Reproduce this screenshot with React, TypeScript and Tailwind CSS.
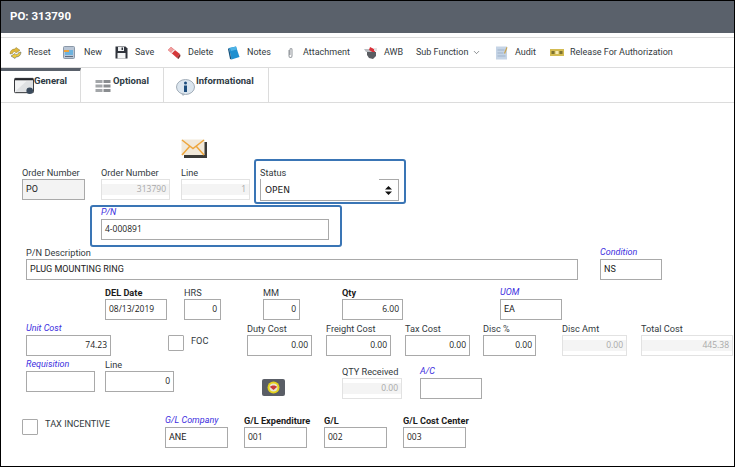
import type { ReactNode } from 'react';
import { ChevronDown } from 'lucide-react';

const ui = "font-['Roboto','Noto_Sans',sans-serif]";
const digits = "font-['Open_Sans',sans-serif]";

function ResetIcon() {
  return (
    <svg width="13" height="12" viewBox="0 0 13 12" className="shrink-0">
      <path d="M1 7c0-3 2-5 5-5l1-1.500 4 2.800-4 2.700-1-1.500c-1 0-2 .5-2.500 2z" fill="#e2b93a" stroke="#8a7a32" strokeWidth=".5" />
      <path d="M12 5c0 3-2 5-5 5l-1 1.500-4-2.500 4-2.500 1 1.200c1 0 2-.5 2.500-2z" fill="#eccb3f" stroke="#4c5860" strokeWidth=".5" />
    </svg>
  );
}

function NewIcon() {
  return (
    <svg width="12" height="13" viewBox="0 0 12 13" className="shrink-0">
      <rect x="0.500" y="0.500" width="11" height="12" rx="1" fill="#b9c6d6" stroke="#8b98a8" />
      <rect x="2" y="4" width="8" height="5" fill="#6db3de" />
      <rect x="1" y="4" width="5" height="2" fill="#eda23a" />
      <rect x="2" y="10" width="8" height="1" fill="#5e6b7c" />
    </svg>
  );
}

function SaveIcon() {
  return (
    <svg width="13" height="13" viewBox="0 0 13 13" className="shrink-0">
      <path d="M.5.500h10l2 2v10H.5z" fill="#30343c" />
      <rect x="3" y="1" width="6" height="4" fill="#eef0f2" />
      <rect x="6.500" y="1.500" width="1.500" height="2.500" fill="#30343c" />
      <rect x="2.500" y="7" width="8" height="5.500" fill="#f4f5f6" />
    </svg>
  );
}

function DeleteIcon() {
  return (
    <svg width="14" height="13" viewBox="0 0 14 13" className="shrink-0">
      <path d="M1 4 4 1l9 7-3 4z" fill="#d5383a" />
      <path d="M1 4 4 1l3 2.500-3 3z" fill="#f0a0a0" />
      <path d="M4 6.500 7 3.500l1 .8-3 3z" fill="#f5f5f5" />
      <path d="M10 12l3-4 .5 2-2 3z" fill="#7c2b2b" />
    </svg>
  );
}

function NotesIcon() {
  return (
    <svg width="12" height="14" viewBox="0 0 12 14" className="shrink-0">
      <path d="M1 2 8 .5 11.500 11l-8 2.500z" fill="#1d8fd0" />
      <path d="M1 2 3.500 13.500 2 13 0 3z" fill="#12527e" />
      <path d="M8 .5l1 3-6 1.500-1-3z" fill="#4eb3e6" />
    </svg>
  );
}

function AttachmentIcon() {
  return (
    <svg width="5" height="12" viewBox="0 0 5 12" className="shrink-0">
      <path d="M1 3v6a1.500 1.500 0 0 0 3 0V2.500a1 1 0 0 0-2 0V8" fill="none" stroke="#9a9ea3" strokeWidth="1.100" />
    </svg>
  );
}

function AwbIcon() {
  return (
    <svg width="15" height="14" viewBox="0 0 15 14" className="shrink-0">
      <path d="M0 3h9l1 3H2z" fill="#b9bcc0" />
      <path d="M6 1l6 3-2 3-5-3z" fill="#d9323a" />
      <path d="M3 6h9v4l-3 3-4-1-2-3z" fill="#5a5d62" />
      <rect x="10" y="2" width="3" height="3" fill="#e2e2e2" />
    </svg>
  );
}

function AuditIcon() {
  return (
    <svg width="12" height="14" viewBox="0 0 12 14" className="shrink-0">
      <rect width="11" height="13" y="0.500" fill="#c5d4e6" />
      <path d="M1.500 4h7M1.500 7h6M1.500 10h8" stroke="#9fb2c9" />
      <path d="M8 7l2.500-6 1 .5L9 8z" fill="#c9a24a" />
    </svg>
  );
}

function ReleaseIcon() {
  return (
    <svg width="14" height="7" viewBox="0 0 14 7" className="shrink-0">
      <rect width="14" height="7" fill="#d3bb52" />
      <rect x="1.500" y="2" width="3" height="3" fill="#7d7330" />
      <rect x="5.500" y="2" width="3" height="3" fill="#f5ecb8" />
      <rect x="9.500" y="2" width="3" height="3" fill="#7d7330" />
    </svg>
  );
}

function WindowIcon() {
  return (
    <svg width="20" height="18" viewBox="0 0 21 18" className="shrink-0">
      <rect x="0.500" y="1" width="20" height="15" rx="1" fill="#f1f2f3" stroke="#26282c" />
      <rect x="1" y="1" width="19" height="2" fill="#26282c" />
      <path d="M2 14 13 4h7v11H2z" fill="#dfe1e3" />
      <circle cx="16.500" cy="14" r="3.500" fill="#3a4a5c" />
    </svg>
  );
}

function GridIcon() {
  return (
    <svg width="16" height="14" viewBox="0 0 16 14" className="shrink-0">
      {[1, 5.5, 10].map((y) => (
        <g key={y}>
          <rect x="0.500" y={y} width="7" height="3" fill="#a3a6a9" />
          <rect x="8.500" y={y} width="7" height="3" fill="#8a8d90" />
        </g>
      ))}
    </svg>
  );
}

function InfoIcon() {
  return (
    <svg width="19" height="17" viewBox="0 0 19 17" className="shrink-0">
      <ellipse cx="9.500" cy="8" rx="9" ry="7.500" fill="#dbe5ee" stroke="#a2adb8" />
      <path d="M5 14l2 3 2-2z" fill="#aab5c0" />
      <circle cx="9.500" cy="4" r="1.500" fill="#1c4c7c" />
      <rect x="8" y="6.500" width="3" height="6.500" fill="#1c4c7c" />
    </svg>
  );
}

function MailIcon() {
  return (
    <svg width="26" height="19" viewBox="0 0 26 19">
      <rect x="3" y="3" width="23" height="16" fill="#3b3b38" />
      <rect x="0.500" y="0.500" width="23" height="15.500" fill="#f1e9da" />
      <path d="M1 1l11 8.500L23 1M1 16l8-9M23 16l-8-9" fill="none" stroke="#eea63c" strokeWidth="1.500" />
    </svg>
  );
}

function CoinIcon() {
  return (
    <div className="flex h-[17px] w-[23px] items-center justify-center rounded-[2px] bg-[#5a5e66]">
      <svg width="13" height="13" viewBox="0 0 13 13">
        <circle cx="6.500" cy="6.500" r="6" fill="#e4d21c" />
        <circle cx="6.500" cy="6.500" r="4" fill="#e8e4d0" />
        <path d="M3 6c1-2 6-2 7 0l-3.500 3z" fill="#c8383a" />
      </svg>
    </div>
  );
}

function ToolItem({ icon, label, className }: { icon: ReactNode; label: ReactNode; className: string }) {
  return (
    <div className={`flex shrink-0 items-center whitespace-nowrap ${className}`}>
      {icon}
      {label}
    </div>
  );
}

function Label({ text, kind }: { text: string; kind?: 'link' | 'bold' }) {
  const tone =
    kind === 'link'
      ? 'text-[9px] text-[#3d2fe0] italic'
      : kind === 'bold'
        ? 'text-[9.200px] font-bold text-[#1c1c1c]'
        : 'text-[9.200px] text-[#333a40]';
  return <div className={`flex h-[12px] items-center whitespace-nowrap ${ui} ${tone}`}>{text}</div>;
}

function Field({
  label,
  kind,
  value,
  className,
  align,
  variant,
  plain,
}: {
  label?: string;
  kind?: 'link' | 'bold';
  value?: string;
  className: string;
  align?: 'right';
  variant?: 'disabled' | 'shaded';
  plain?: boolean;
}) {
  const box =
    variant === 'disabled'
      ? 'border-[#e2e2e2] bg-[linear-gradient(#fff_20%,#f4f4f4_20%,#f4f4f4_80%,#fff_80%)] text-[#a8a8a8]'
      : variant === 'shaded'
        ? 'border-[#a9a9a9] bg-[#f3f3f3] text-[#222]'
        : 'border-[#a9a9a9] bg-white text-[#222]';
  // letters render in the UI face, digits in the wider one
  const face = plain ? `text-[9px] ${ui}` : `text-[8.500px] ${digits}`;
  return (
    <div className={`shrink-0 ${className}`}>
      {label && <Label text={label} kind={kind} />}
      <div
        className={`flex h-[21px] items-center border px-[3px] ${face} ${box} ${align === 'right' ? 'justify-end' : ''}`}
      >
        {value}
      </div>
    </div>
  );
}

function Checkbox() {
  return <div className="h-[16px] w-[16px] shrink-0 rounded-[1px] border border-[#a9a9a9] bg-white" />;
}

export default function App() {
  return (
    <div className="box-border h-[467px] w-[735px] overflow-hidden border border-black bg-white">
      <div className={`flex h-[32px] items-center bg-[#5a616b] pl-[9px] text-[11.500px] font-bold text-white ${ui}`}>
        PO: 313790
      </div>

      <div className={`mt-[4px] flex h-[31px] items-center border-y border-[#dcdcdc] pl-[8px] text-[9px] text-[#333a40] ${ui}`}>
        <ToolItem className="w-[54px] gap-[6px]" icon={<ResetIcon />} label="Reset" />
        <ToolItem className="w-[52px] gap-[9px]" icon={<NewIcon />} label="New" />
        <ToolItem className="w-[52px] gap-[7px]" icon={<SaveIcon />} label="Save" />
        <ToolItem className="w-[61px] gap-[7px]" icon={<DeleteIcon />} label="Delete" />
        <ToolItem className="w-[60px] gap-[7px]" icon={<NotesIcon />} label="Notes" />
        <ToolItem className="w-[76px] gap-[10px]" icon={<AttachmentIcon />} label="Attachment" />
        <ToolItem className="w-[52px] gap-[5px]" icon={<AwbIcon />} label="AWB" />
        <div className="flex w-[80px] shrink-0 items-center gap-[4px] whitespace-nowrap">
          Sub Function
          <ChevronDown size={9} strokeWidth={1.5} />
        </div>
        <ToolItem className="w-[54px] gap-[7px]" icon={<AuditIcon />} label="Audit" />
        <ToolItem className="gap-[6px]" icon={<ReleaseIcon />} label="Release For Authorization" />
      </div>

      <div className={`flex h-[35px] border-b border-[#dcdcdc] text-[9.500px] font-bold text-[#2e3a44] ${ui}`}>
        <div className="flex w-[80px] border-r border-t-[3px] border-r-[#dcdcdc] border-t-[#5a616b] pl-[13px] pt-[3px]">
          <div className="mt-[3px]"><WindowIcon /></div>
          <span className="leading-[14px]">General</span>
        </div>
        <div className="flex w-[83px] border-r border-[#dcdcdc] pl-[14px] pt-[6px]">
          <div className="mr-[2px] mt-[5px]"><GridIcon /></div>
          <span className="leading-[14px]">Optional</span>
        </div>
        <div className="flex w-[105px] border-r border-[#dcdcdc] pl-[12px] pt-[6px]">
          <div className="mr-[1px] mt-[5px]"><InfoIcon /></div>
          <span className="leading-[14px]">Informational</span>
        </div>
      </div>

      {/* Order row: envelope sits over the Line column */}
      <div className="mt-[36px] flex items-end pl-[21px]">
        <Field className="w-[63px]" label="Order Number" value="PO" variant="shaded" plain />
        <Field className="ml-[16px] w-[69px]" label="Order Number" value="313790" align="right" variant="disabled" />
        <div className="ml-[11px] w-[69px] shrink-0">
          <div className="mb-[9px]"><MailIcon /></div>
          <Field className="w-[69px]" label="Line" value="1" align="right" variant="disabled" />
        </div>
        <div className="mb-[-4px] ml-[4px] box-border h-[45px] w-[152px] shrink-0 rounded-[3px] border-[2px] border-[#3a75b5] pl-[4px] pt-[6px]">
          <Label text="Status" />
          <div className="flex h-[22px] w-[139px] items-stretch justify-between border-b border-l border-r border-[#a9a9a9] pl-[4px] text-[9px] text-[#222] font-['DejaVu_Sans',sans-serif]">
            <span className="mt-[5px]">OPEN</span>
            <div className="flex w-[19px] items-center justify-center border-t border-[#a9a9a9]">
              <svg width="7" height="9" viewBox="0 0 7 9">
                <path d="M3.500 0 7 3.500H0zM3.500 9 0 5.500h7z" fill="#111" />
              </svg>
            </div>
          </div>
        </div>
      </div>

      <div className="ml-[89px] mt-[5px] box-border h-[42px] w-[252px] rounded-[3px] border-[2px] border-[#3a75b5] pl-[9px]">
        <Label text="P/N" kind="link" />
        <div className={`flex h-[21px] w-[228px] items-center border border-[#a9a9a9] px-[3px] text-[8.500px] text-[#222] ${digits}`}>
          4-000891
        </div>
      </div>

      <div className="flex pl-[25px]">
        <Field className="w-[552px]" label="P/N Description" value="PLUG MOUNTING RING" plain />
        <Field className="ml-[22px] w-[62px]" label="Condition" kind="link" value="NS" plain />
      </div>

      <div className="mt-[7px] flex pl-[25px]">
        <Field className="ml-[79px] w-[62px]" label="DEL Date" kind="bold" value="08/13/2019" />
        <Field className="ml-[17px] w-[37px]" label="HRS" value="0" align="right" />
        <Field className="ml-[42px] w-[37px]" label="MM" value="0" align="right" />
        <Field className="ml-[42px] w-[61px]" label="Qty" kind="bold" value="6.00" align="right" />
        <Field className="ml-[97px] w-[62px]" label="UOM" kind="link" value="EA" plain />
      </div>

      <div className="mt-[3px] flex pl-[25px]">
        <Field className="w-[85px]" label="Unit Cost" kind="link" value="74.23" align="right" />
        <div className="ml-[57px] mt-[12px] flex w-[79px] shrink-0 items-start gap-[7px]">
          <Checkbox />
          <Label text="FOC" />
        </div>
        <Field className="w-[65px]" label="Duty Cost" value="0.00" align="right" />
        <Field className="ml-[14px] w-[65px]" label="Freight Cost" value="0.00" align="right" />
        <Field className="ml-[14px] w-[65px]" label="Tax Cost" value="0.00" align="right" />
        <Field className="ml-[13px] w-[53px]" label="Disc %" value="0.00" align="right" />
        <Field className="ml-[26px] w-[65px]" label="Disc Amt" value="0.00" align="right" variant="disabled" />
        <Field className="ml-[14px] w-[92px]" label="Total Cost" value="445.38" align="right" variant="disabled" />
      </div>

      <div className="mt-[3px] flex pl-[25px]">
        <Field className="w-[69px]" label="Requisition" kind="link" />
        <Field className="ml-[10px] w-[69px]" label="Line" value="0" align="right" />
        <div className="ml-[88px] mt-[20px]"><CoinIcon /></div>
        <Field className="ml-[57px] mt-[7px] w-[60px]" label="QTY Received" value="0.00" align="right" variant="disabled" />
        <Field className="ml-[18px] mt-[7px] w-[62px]" label="A/C" kind="link" />
      </div>

      <div className="mt-[16px] flex pl-[21px]">
        <div className="mt-[4px] flex w-[143px] shrink-0 items-start gap-[7px]">
          <Checkbox />
          <div className="mt-[-1px]"><Label text="TAX INCENTIVE" /></div>
        </div>
        <Field className="w-[63px]" label="G/L Company" kind="link" value="ANE" plain />
        <Field className="ml-[16px] w-[63px]" label="G/L Expenditure" kind="bold" value="001" />
        <Field className="ml-[17px] w-[63px]" label="G/L" kind="bold" value="002" />
        <Field className="ml-[16px] w-[63px]" label="G/L Cost Center" kind="bold" value="003" />
      </div>
    </div>
  );
}
